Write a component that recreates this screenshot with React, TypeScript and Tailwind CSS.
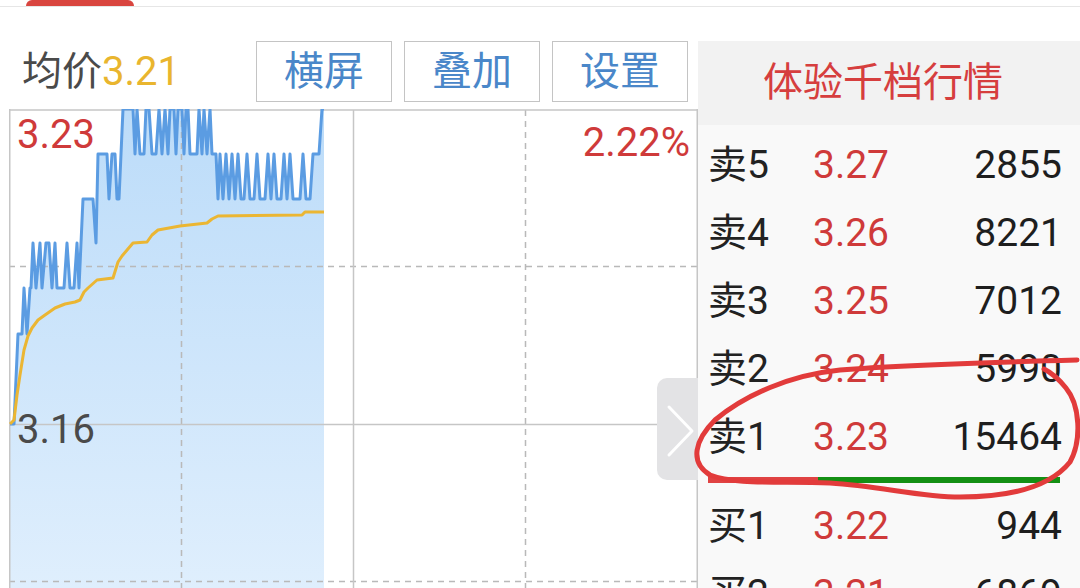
import React from "react";

const bluePts: [number, number][] = [
  [10, 424], [14, 424], [18, 334], [22, 334], [24, 288], [27, 334], [30, 288],
  [31, 288], [33, 243], [36, 288], [40, 243], [42, 288], [46, 243], [49, 243],
  [52, 288], [55, 243], [57, 288], [64, 288], [67, 243], [70, 288], [74, 288],
  [77, 243], [79, 288], [81, 243], [83, 199], [93, 199], [96, 243], [98, 154],
  [107, 154], [109, 199], [112, 154], [115, 154], [117, 199], [119, 199],
  [121, 154], [123, 109], [133, 109], [135, 154], [137, 109], [140, 154],
  [144, 154], [146, 109], [149, 109], [152, 154], [156, 154], [159, 109],
  [162, 154], [165, 109], [168, 154], [170, 109], [174, 109], [176, 154],
  [178, 109], [182, 109], [184, 154], [186, 109], [188, 109], [190, 154],
  [197, 154], [199, 109], [202, 154], [204, 109], [207, 154], [210, 109],
  [212, 154], [216, 154], [218, 199], [220, 154], [223, 199], [226, 154],
  [229, 199], [232, 154], [235, 199], [238, 154], [241, 199], [244, 199],
  [247, 154], [250, 199], [254, 199], [257, 154], [260, 199], [265, 199],
  [268, 154], [271, 199], [274, 154], [277, 199], [281, 199], [284, 154],
  [287, 199], [290, 154], [293, 199], [300, 199], [303, 154], [306, 199],
  [310, 199], [313, 154], [319, 154], [322, 109], [324, 109],
];

const yellowPts: [number, number][] = [
  [10, 424], [14, 420], [17, 395], [20, 375], [24, 350], [28, 336], [32, 328],
  [38, 320], [45, 315], [55, 308], [65, 304], [75, 302], [80, 300], [84, 292],
  [88, 288], [97, 280], [113, 278], [118, 262], [122, 256], [133, 243],
  [147, 242], [152, 235], [158, 230], [180, 226], [207, 223], [212, 219],
  [218, 216], [302, 215], [305, 212], [324, 212],
];

const toPath = (pts: [number, number][]) =>
  pts.map((p, i) => `${i === 0 ? "M" : "L"}${p[0]},${p[1]}`).join(" ");

const fillPath = toPath(bluePts) + ` L324,600 L10,600 Z`;

function Chart() {
  return (
    <div className="relative w-[689px] h-[479px] ml-[9px]">
      <svg
        width="689"
        height="479"
        viewBox="9 109 689 479"
        className="absolute left-0 top-0"
      >
        <defs>
          <linearGradient id="fillg" x1="0" y1="0" x2="0" y2="1">
            <stop offset="0" stopColor="#bcdcf9" />
            <stop offset="1" stopColor="#e0effd" />
          </linearGradient>
        </defs>
        <path d={fillPath} fill="url(#fillg)" />
        <g stroke="#b9b9b9" strokeWidth="1.5" strokeDasharray="6 5" fill="none">
          <line x1="9" y1="266.5" x2="698" y2="266.5" />
          <line x1="9" y1="581.5" x2="698" y2="581.5" />
          <line x1="181.5" y1="110" x2="181.5" y2="600" />
          <line x1="525.5" y1="110" x2="525.5" y2="600" />
        </g>
        <g stroke="#c6c6c6" strokeWidth="1.5" fill="none">
          <line x1="9" y1="110" x2="698" y2="110" />
          <line x1="9.75" y1="109" x2="9.75" y2="600" />
          <line x1="697.25" y1="109" x2="697.25" y2="600" />
          <line x1="353.5" y1="110" x2="353.5" y2="600" />
          <line x1="9" y1="424.5" x2="698" y2="424.5" />
        </g>
        <path
          d={toPath(bluePts)}
          fill="none"
          stroke="#5b9ce2"
          strokeWidth="3"
          strokeLinejoin="round"
        />
        <path
          d={toPath(yellowPts)}
          fill="none"
          stroke="#ebb633"
          strokeWidth="3"
          strokeLinejoin="round"
        />
      </svg>
      <div className="absolute left-[8px] top-[6px] text-[40px] leading-none text-[#cf3a3a]">
        3.23
      </div>
      <div className="absolute left-[8px] top-[301px] text-[40px] leading-none text-[#4a4a4a]">
        3.16
      </div>
      <div className="absolute right-[8px] top-[14px] text-[40px] leading-none text-[#cf3a3a]">
        2.22%
      </div>
    </div>
  );
}

function Btn({ children }: { children: React.ReactNode }) {
  return (
    <div className="w-[136px] h-[61px] border-[1.5px] border-[#c4c4c4] flex items-center justify-center text-[40px] leading-none text-[#4a87c9]">
      {children}
    </div>
  );
}

function Row({ label, price, vol }: { label: string; price: string; vol: string }) {
  return (
    <div className="h-[68px] flex items-center pl-[10px] pr-[18px]">
      <span className="w-[105px] text-[39px] leading-none text-[#222]">{label}</span>
      <span className="text-[39px] leading-none text-[#cf3a3a]">{price}</span>
      <span className="ml-auto text-[39px] leading-none text-[#1e1e1e]">{vol}</span>
    </div>
  );
}

export default function App() {
  return (
    <div
      className="relative w-[1080px] h-[588px] overflow-hidden bg-white"
      style={{ fontFamily: "Roboto, 'Noto Sans CJK SC', sans-serif" }}
    >
      <div className="h-[7px] border-b border-[#e6e6e6]">
        <div className="ml-[26px] w-[108px] h-[6px] bg-[#d9453f] rounded-t-[6px]" />
      </div>
      <div className="flex">
        <div className="w-[698px] shrink-0">
          <div className="h-[102px] pt-[34px]">
            <div className="h-[61px] flex items-center pl-[22px] pr-[10px]">
              <span className="text-[40px] leading-none text-[#4a4a4a]">均价</span>
              <span className="text-[40px] leading-none text-[#e9b52e]">3.21</span>
              <div className="ml-auto flex gap-[12px]">
                <Btn>横屏</Btn>
                <Btn>叠加</Btn>
                <Btn>设置</Btn>
              </div>
            </div>
          </div>
          <Chart />
        </div>
        <div className="w-[382px] shrink-0 mt-[34px] bg-[#f9f9f9] h-[600px]">
          <div className="h-[84px] bg-[#f2f2f2] flex items-center justify-center pr-[12px] text-[40px] leading-none text-[#d63e3e]">
            体验千档行情
          </div>
          <div className="pt-[6px]">
            <Row label="卖5" price="3.27" vol="2855" />
            <Row label="卖4" price="3.26" vol="8221" />
            <Row label="卖3" price="3.25" vol="7012" />
            <Row label="卖2" price="3.24" vol="5990" />
            <Row label="卖1" price="3.23" vol="15464" />
            <div className="mt-[6px] mb-[9px] ml-[10px] mr-[20px] h-[6px] flex">
              <div className="w-[110px] bg-[#e04343]" />
              <div className="flex-1 bg-[#149014]" />
            </div>
            <Row label="买1" price="3.22" vol="944" />
            <Row label="买2" price="3.21" vol="6869" />
          </div>
        </div>
      </div>

      <div className="absolute left-[657px] top-[378px] w-[41px] h-[102px] bg-[#e3e3e5] rounded-l-[10px]">
        <svg width="41" height="102" viewBox="0 0 41 102">
          <polyline
            points="12,29 35,53 12,77"
            fill="none"
            stroke="#ffffff"
            strokeWidth="3"
            strokeLinecap="round"
            strokeLinejoin="round"
          />
        </svg>
      </div>

      <svg
        className="absolute left-0 top-0 pointer-events-none"
        width="1080"
        height="588"
        viewBox="0 0 1080 588"
      >
        <path
          d="M1077,360 C1000,362 900,365 840,370 C790,375 745,395 715,420 C695,440 689,462 710,475 C735,485 780,481 830,483 C880,486 920,497 960,497 C1010,497 1050,487 1070,462 C1082,440 1080,405 1066,388 C1058,378 1050,372 1044,369"
          fill="none"
          stroke="#e23b3b"
          strokeWidth="5"
          strokeLinecap="round"
          strokeLinejoin="round"
        />
      </svg>
    </div>
  );
}
